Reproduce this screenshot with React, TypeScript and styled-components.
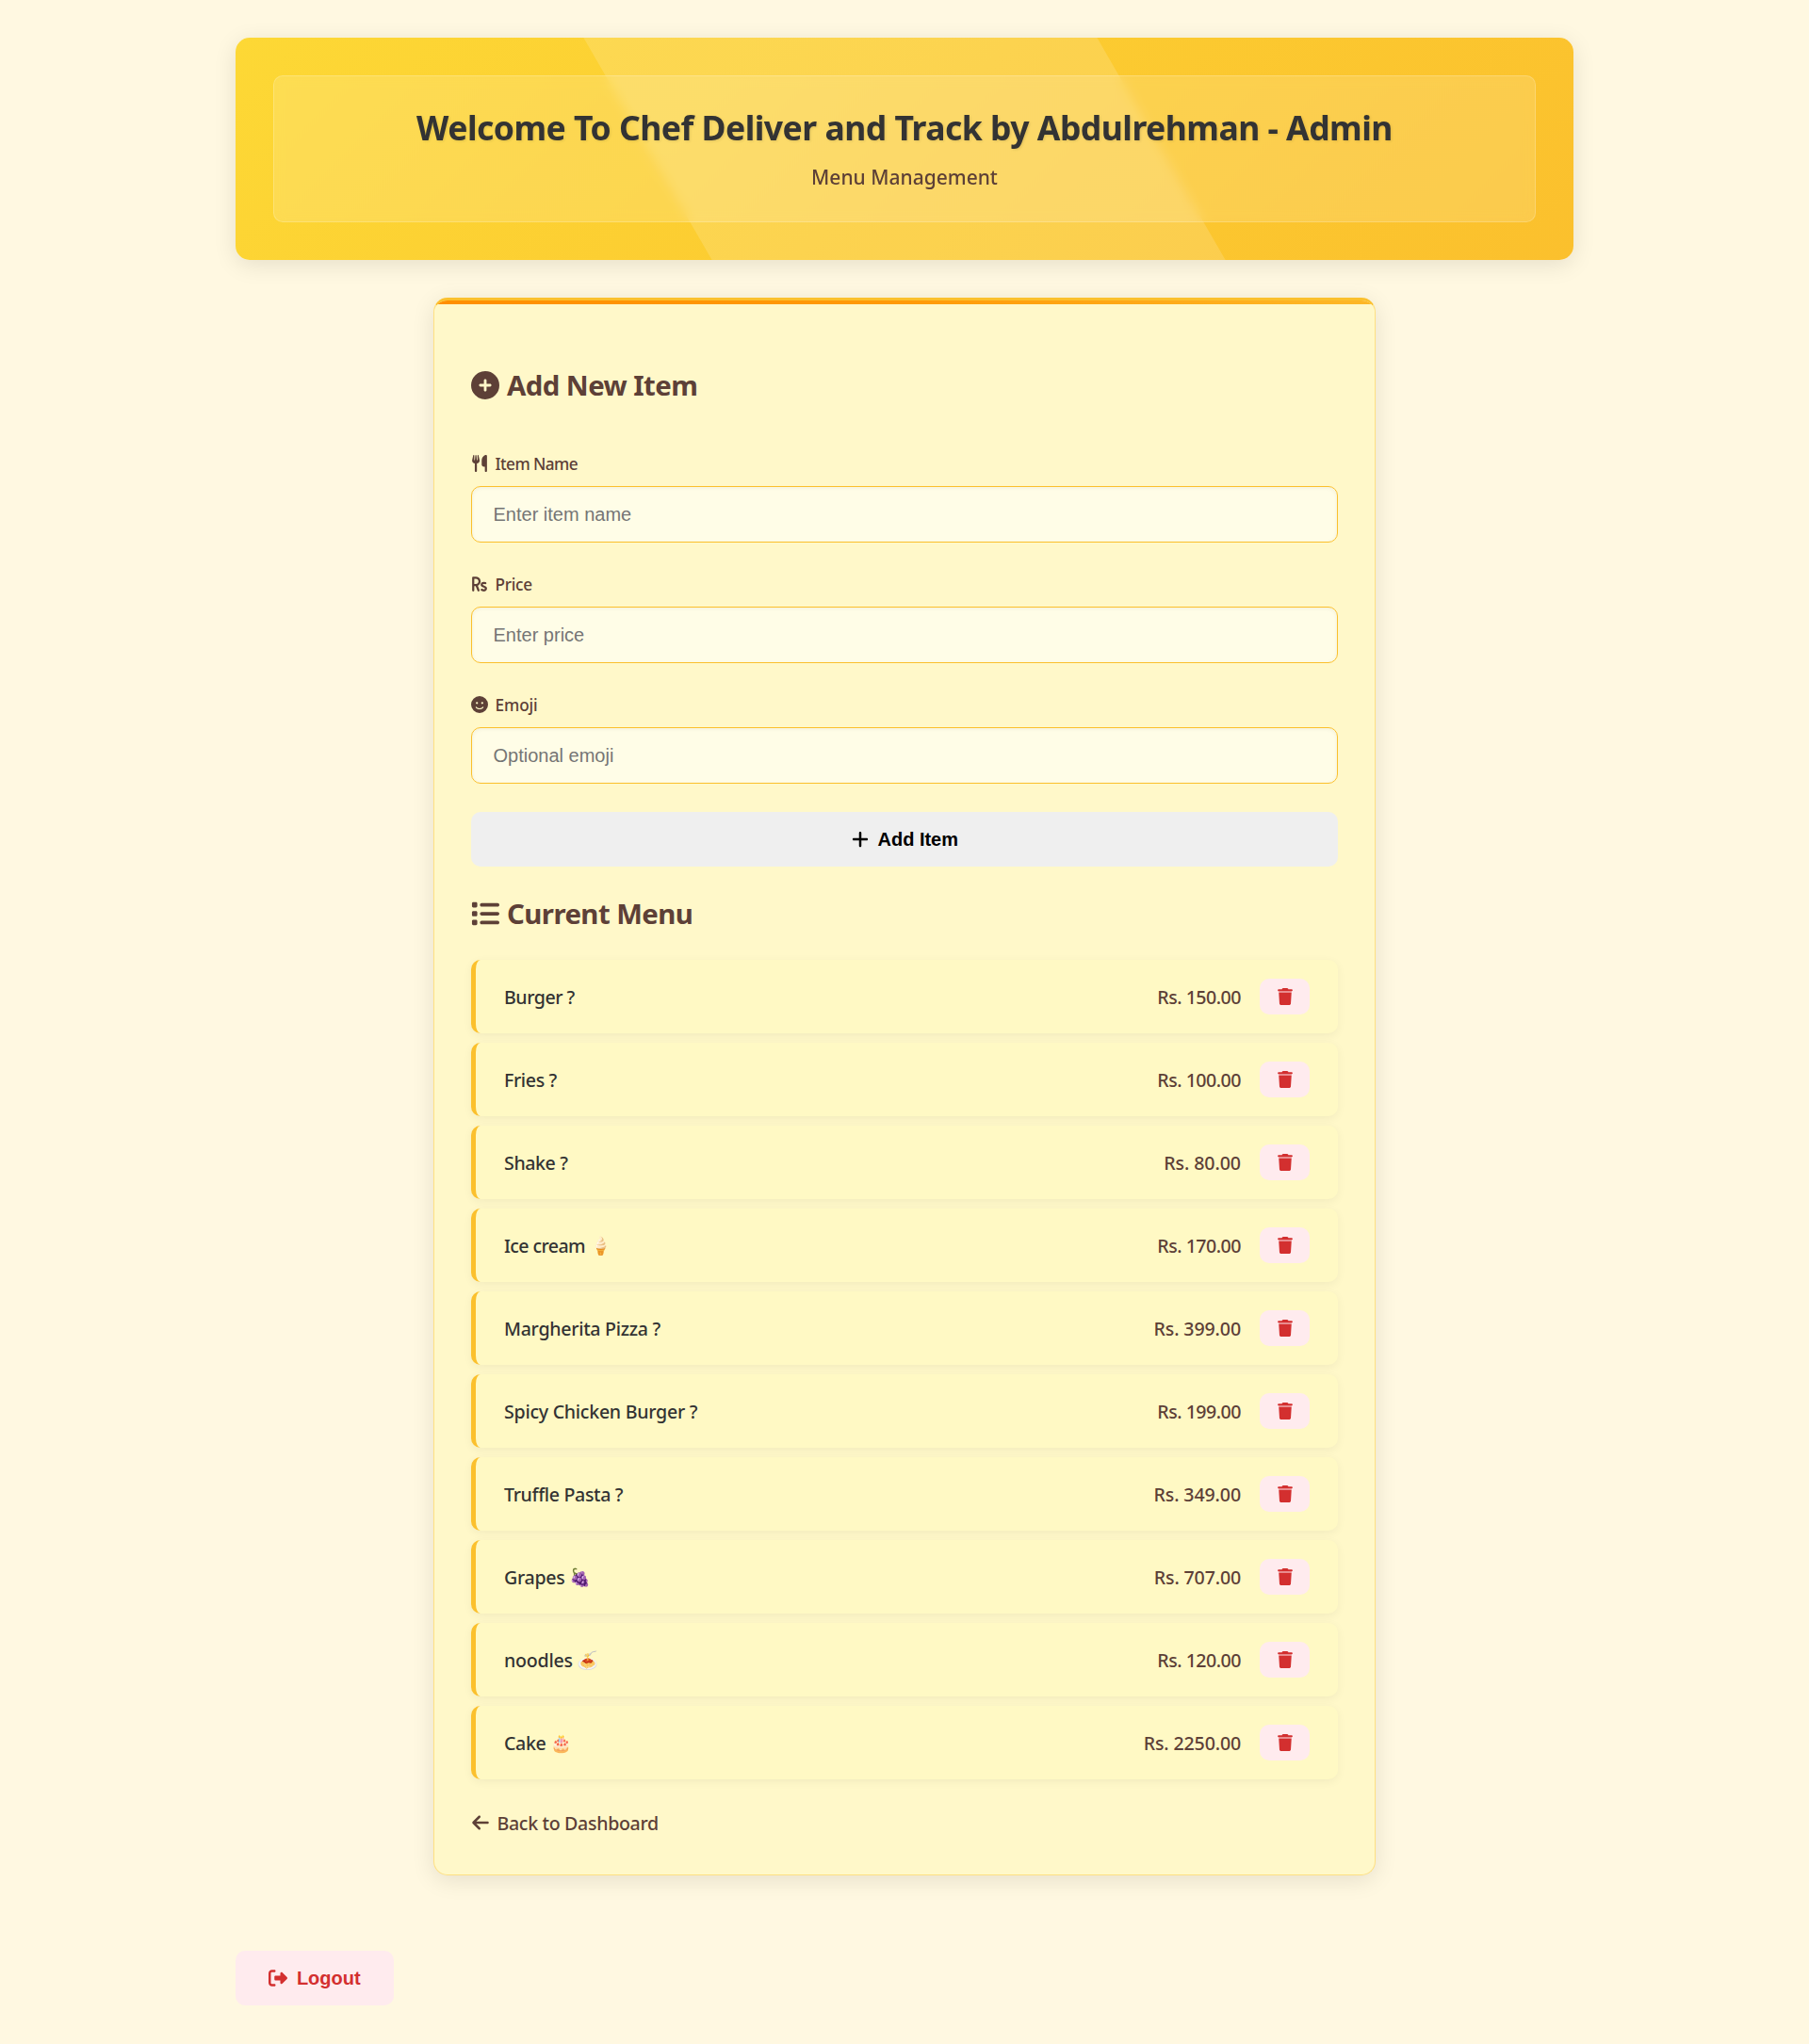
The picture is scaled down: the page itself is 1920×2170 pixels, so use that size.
import React from 'react';
import styled, { createGlobalStyle } from 'styled-components';
import {
  FaCirclePlus,
  FaUtensils,
  FaRupeeSign,
  FaFaceSmile,
  FaPlus,
  FaList,
  FaTrash,
  FaArrowLeft,
  FaRightFromBracket,
} from 'react-icons/fa6';

const GlobalStyle = createGlobalStyle`
  * { box-sizing: border-box; }
  body {
    margin: 0;
    background: #fff8e1;
    color: #333;
    font-family: 'Noto Sans', 'Open Sans', sans-serif;
  }
  svg { display: block; flex: none; height: 1em; width: auto; }
`;

const Page = styled.div`
  width: 1420px;
  min-height: 2170px;
  margin: 0 auto;
  padding-top: 40px;
  display: flex;
  flex-direction: column;
`;

const Header = styled.header`
  position: relative;
  overflow: hidden;
  height: 236px;
  padding: 40px;
  border-radius: 15px;
  background: linear-gradient(135deg, #fdd835, #fbc02d);
  box-shadow: 0 5px 25px rgba(0, 0, 0, 0.1);

  &::before {
    content: '';
    position: absolute;
    top: -50%;
    left: -50%;
    width: 200%;
    height: 200%;
    background: rgba(255, 255, 255, 0.15);
    transform: rotate(60deg);
  }
`;

const HeaderPanel = styled.div`
  position: relative;
  height: 156px;
  padding-top: 29px;
  border: 1px solid rgba(255, 255, 255, 0.2);
  border-radius: 10px;
  background: rgba(255, 255, 255, 0.15);
  backdrop-filter: blur(6px);
  text-align: center;
`;

const Title = styled.h1`
  margin: 0 0 13px;
  font-size: 35.5px;
  font-weight: 700;
  line-height: 50px;
  letter-spacing: -0.5px;
  text-shadow: 1px 1px 3px rgba(0, 0, 0, 0.12);
`;

const Subtitle = styled.p`
  margin: 0;
  font-size: 21px;
  font-weight: 500;
  line-height: 30px;
  color: #5d4037;
`;

const Card = styled.main`
  position: relative;
  width: 1000px;
  margin: 40px auto 0;
  padding: 70px 39px 40px;
  border: 1px solid #ffe082;
  border-top: 3px solid #fbc02d;
  border-radius: 15px;
  background: #fff8c9;
  box-shadow: 0 5px 25px rgba(0, 0, 0, 0.1);
  overflow: hidden;

  &::before {
    content: '';
    position: absolute;
    top: 0;
    left: 0;
    right: 0;
    height: 3.75px;
    background: linear-gradient(90deg, #ff8f00, #ff9a08 50%, #fdb827);
  }
`;

const SectionTitle = styled.h2<{ $top?: number }>`
  display: flex;
  align-items: center;
  gap: 8px;
  margin: ${(p) => p.$top ?? 0}px 0 0;
  font-size: 29.4px;
  font-weight: 700;
  line-height: 40px;
  letter-spacing: -0.57px;
  color: #5d4037;

  svg { font-size: 30px; }
`;

const Form = styled.form`
  display: flex;
  flex-direction: column;
  margin-top: 51px;
`;

const Fields = styled.div`
  display: grid;
  gap: 32px;
`;

const Field = styled.div`
  display: flex;
  flex-direction: column;
  gap: 12px;
`;

const Label = styled.label<{ $tracking: number }>`
  display: flex;
  align-items: center;
  gap: 7.5px;
  height: 24px;
  font-size: 17.2px;
  font-weight: 500;
  line-height: 24px;
  letter-spacing: ${(p) => p.$tracking}px;
  color: #5d4037;

  svg { font-size: 18px; }
  span { padding-top: 2px; }
`;

const Input = styled.input`
  height: 60px;
  width: 100%;
  padding: 0 22.5px;
  border: 1px solid #fbc02d;
  border-radius: 10px;
  background: #fffde7;
  box-shadow: inset 0 1px 4px rgba(0, 0, 0, 0.06);
  font-family: 'Liberation Sans', Arial, sans-serif;
  font-size: 20px;

  &::placeholder { color: #757575; }
`;

const Button = styled.button<{ $danger?: boolean }>`
  display: flex;
  align-items: center;
  justify-content: center;
  gap: 9.5px;
  height: 58px;
  padding: 0;
  border: 0;
  border-radius: 10px;
  background: ${(p) => (p.$danger ? '#ffebee' : '#efefef')};
  color: ${(p) => (p.$danger ? '#d32f2f' : '#000')};
  font-family: 'Liberation Sans', Arial, sans-serif;
  font-size: 20px;
  font-weight: 700;
`;

const AddButton = styled(Button)`
  margin-top: 30px;
  gap: 8.5px;
`;

const LogoutButton = styled(Button)`
  width: 168px;
  margin-top: 80px;
`;

const MenuList = styled.ul`
  display: grid;
  gap: 10px;
  margin: 29px 0 0;
  padding: 0;
  list-style: none;
`;

const MenuRow = styled.li`
  display: flex;
  align-items: center;
  height: 78px;
  padding: 0 30px 0 30px;
  border-left: 5px solid #fbc02d;
  border-radius: 10px;
  background: #fff9c4;
  box-shadow: 0 2.5px 10px rgba(0, 0, 0, 0.05);
  font-size: 19.6px;
  font-weight: 500;
  line-height: 30px;
`;

const ItemName = styled.span<{ $tracking: number }>`
  padding-top: 2px;
  letter-spacing: ${(p) => p.$tracking}px;
`;

const ItemEmoji = styled.span`
  margin-left: 5px;
  padding-top: 1px;
  font-family: 'Noto Color Emoji', sans-serif;
  font-size: 18.5px;
  line-height: 30px;
`;

const Price = styled.span<{ $tracking: number }>`
  margin-left: auto;
  margin-right: 20px;
  padding-top: 2px;
  color: #5d4037;
  letter-spacing: ${(p) => p.$tracking}px;
`;

const DeleteButton = styled.button`
  display: flex;
  align-items: center;
  justify-content: center;
  width: 53px;
  height: 38px;
  padding: 0;
  border: 0;
  border-radius: 10px;
  background: #ffebee;
  color: #d32f2f;
  font-size: 18px;
`;

const BackLink = styled.a`
  display: flex;
  align-items: center;
  gap: 7.5px;
  height: 30px;
  margin-top: 31px;
  font-size: 19.6px;
  font-weight: 500;
  line-height: 30px;
  letter-spacing: -0.33px;
  color: #5d4037;

  svg { font-size: 20px; }
  span { padding-top: 2px; }
`;

const fields = [
  { icon: <FaUtensils />, label: 'Item Name', placeholder: 'Enter item name', tracking: -0.55 },
  { icon: <FaRupeeSign />, label: 'Price', placeholder: 'Enter price', tracking: -0.3 },
  { icon: <FaFaceSmile />, label: 'Emoji', placeholder: 'Optional emoji', tracking: -0.1 },
];

const items = [
  { name: 'Burger ?', price: '150.00', nt: -0.48, pt: -0.5 },
  { name: 'Fries ?', price: '100.00', nt: -0.38, pt: -0.5 },
  { name: 'Shake ?', price: '80.00', nt: -0.4, pt: -0.08 },
  { name: 'Ice cream', emoji: '🍦', price: '170.00', nt: -0.6, pt: -0.5 },
  { name: 'Margherita Pizza ?', price: '399.00', nt: -0.3, pt: -0.12 },
  { name: 'Spicy Chicken Burger ?', price: '199.00', nt: -0.27, pt: -0.5 },
  { name: 'Truffle Pasta ?', price: '349.00', nt: -0.35, pt: -0.12 },
  { name: 'Grapes', emoji: '🍇', price: '707.00', nt: -0.3, pt: -0.15 },
  { name: 'noodles', emoji: '🍝', price: '120.00', nt: -0.25, pt: -0.5 },
  { name: 'Cake', emoji: '🎂', price: '2250.00', nt: -0.35, pt: -0.15 },
];

export default function App() {
  return (
    <>
      <GlobalStyle />
      <Page>
        <Header>
          <HeaderPanel>
            <Title>Welcome To Chef Deliver and Track by Abdulrehman - Admin</Title>
            <Subtitle>Menu Management</Subtitle>
          </HeaderPanel>
        </Header>
        <Card>
          <SectionTitle><FaCirclePlus />Add New Item</SectionTitle>
          <Form>
            <Fields>
              {fields.map((f) => (
                <Field key={f.label}>
                  <Label $tracking={f.tracking}>{f.icon}<span>{f.label}</span></Label>
                  <Input placeholder={f.placeholder} />
                </Field>
              ))}
            </Fields>
            <AddButton type="button"><FaPlus />Add Item</AddButton>
          </Form>
          <SectionTitle $top={30}><FaList />Current Menu</SectionTitle>
          <MenuList>
            {items.map((item) => (
              <MenuRow key={item.name}>
                <ItemName $tracking={item.nt}>{item.name}</ItemName>
                {item.emoji && <ItemEmoji>{item.emoji}</ItemEmoji>}
                <Price $tracking={item.pt}>Rs. {item.price}</Price>
                <DeleteButton type="button" aria-label="Delete"><FaTrash /></DeleteButton>
              </MenuRow>
            ))}
          </MenuList>
          <BackLink><FaArrowLeft /><span>Back to Dashboard</span></BackLink>
        </Card>
        <LogoutButton $danger type="button"><FaRightFromBracket />Logout</LogoutButton>
      </Page>
    </>
  );
}
